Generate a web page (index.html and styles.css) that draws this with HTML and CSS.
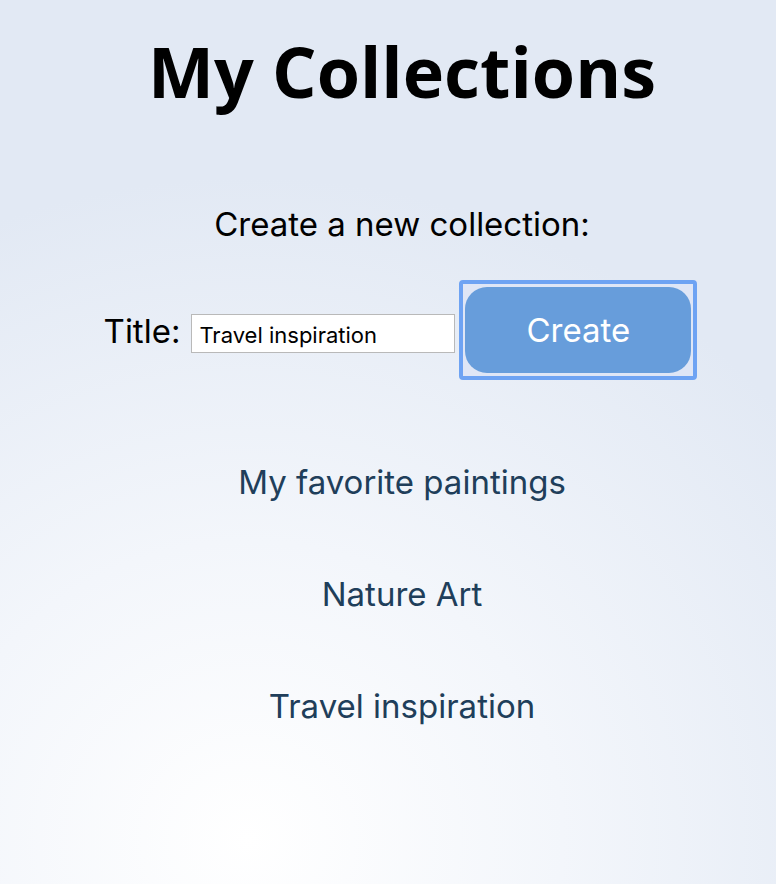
FILE: index.html
```html
<!DOCTYPE html>
<html lang="en">
<head>
<meta charset="utf-8">
<title>My Collections</title>
<link rel="stylesheet" href="styles.css">
</head>
<body>
<main class="page">
  <h1 class="title">My Collections</h1>
  <section class="create">
    <p class="create-label">Create a new collection:</p>
    <form class="create-form">
      <label class="field-label" for="title">Title:</label>
      <input class="field-input" id="title" type="text" value="Travel inspiration">
      <span class="focus-ring"><button class="create-btn" type="button">Create</button></span>
    </form>
  </section>
  <ul class="collections">
    <li class="collection">My favorite paintings</li>
    <li class="collection">Nature Art</li>
    <li class="collection">Travel inspiration</li>
  </ul>
</main>
</body>
</html>
```

FILE: styles.css
```css
html, body {
  margin: 0;
  padding: 0;
  height: 100%;
}
body {
  background: radial-gradient(ellipse 90% 75% at 32% 95%, #ffffff 0%, #f3f6fb 45%, #e2e9f4 100%);
  font-family: Inter, "Noto Sans", sans-serif;
  color: #000;
}
.page {
  display: flex;
  flex-direction: column;
  align-items: center;
  padding-top: 22px;
  padding-left: 28px;
}
.title {
  font-family: "Open Sans", sans-serif;
  font-weight: 700;
  font-size: 70px;
  line-height: 98px;
  margin: 0;
}
.create {
  display: flex;
  flex-direction: column;
  align-items: center;
  margin-top: 84px;
}
.create-label {
  margin: 0;
  font-size: 33px;
  line-height: 40px;
}
.create-form {
  display: flex;
  align-items: center;
  margin-top: 36px;
  margin-left: -3px;
}
.field-label {
  font-size: 33px;
  line-height: 40px;
  margin-right: 11px;
  margin-top: -6px;
}
.field-input {
  width: 264px;
  height: 39px;
  box-sizing: border-box;
  border: 1px solid #b9b9b9;
  background: #fff;
  font-family: Inter, sans-serif;
  font-size: 22px;
  padding: 2px 7px 0;
  color: #000;
  margin: 0;
}
.focus-ring {
  display: inline-flex;
  margin-left: 4px;
  margin-bottom: 7px;
  border: 4px solid #6ea3f3;
  border-radius: 4px;
  padding: 3px 2px;
  background: #dfe6f6;
}
.create-btn {
  width: 226px;
  height: 86px;
  border: none;
  border-radius: 22px;
  background: #679ddb;
  color: #fff;
  font-family: Inter, sans-serif;
  font-size: 33px;
  padding: 0;
}
.collections {
  list-style: none;
  margin: 75px 0 0;
  padding: 0;
  display: flex;
  flex-direction: column;
  align-items: center;
  gap: 72px;
}
.collection {
  font-size: 33px;
  line-height: 40px;
  color: #203e5a;
}
```
